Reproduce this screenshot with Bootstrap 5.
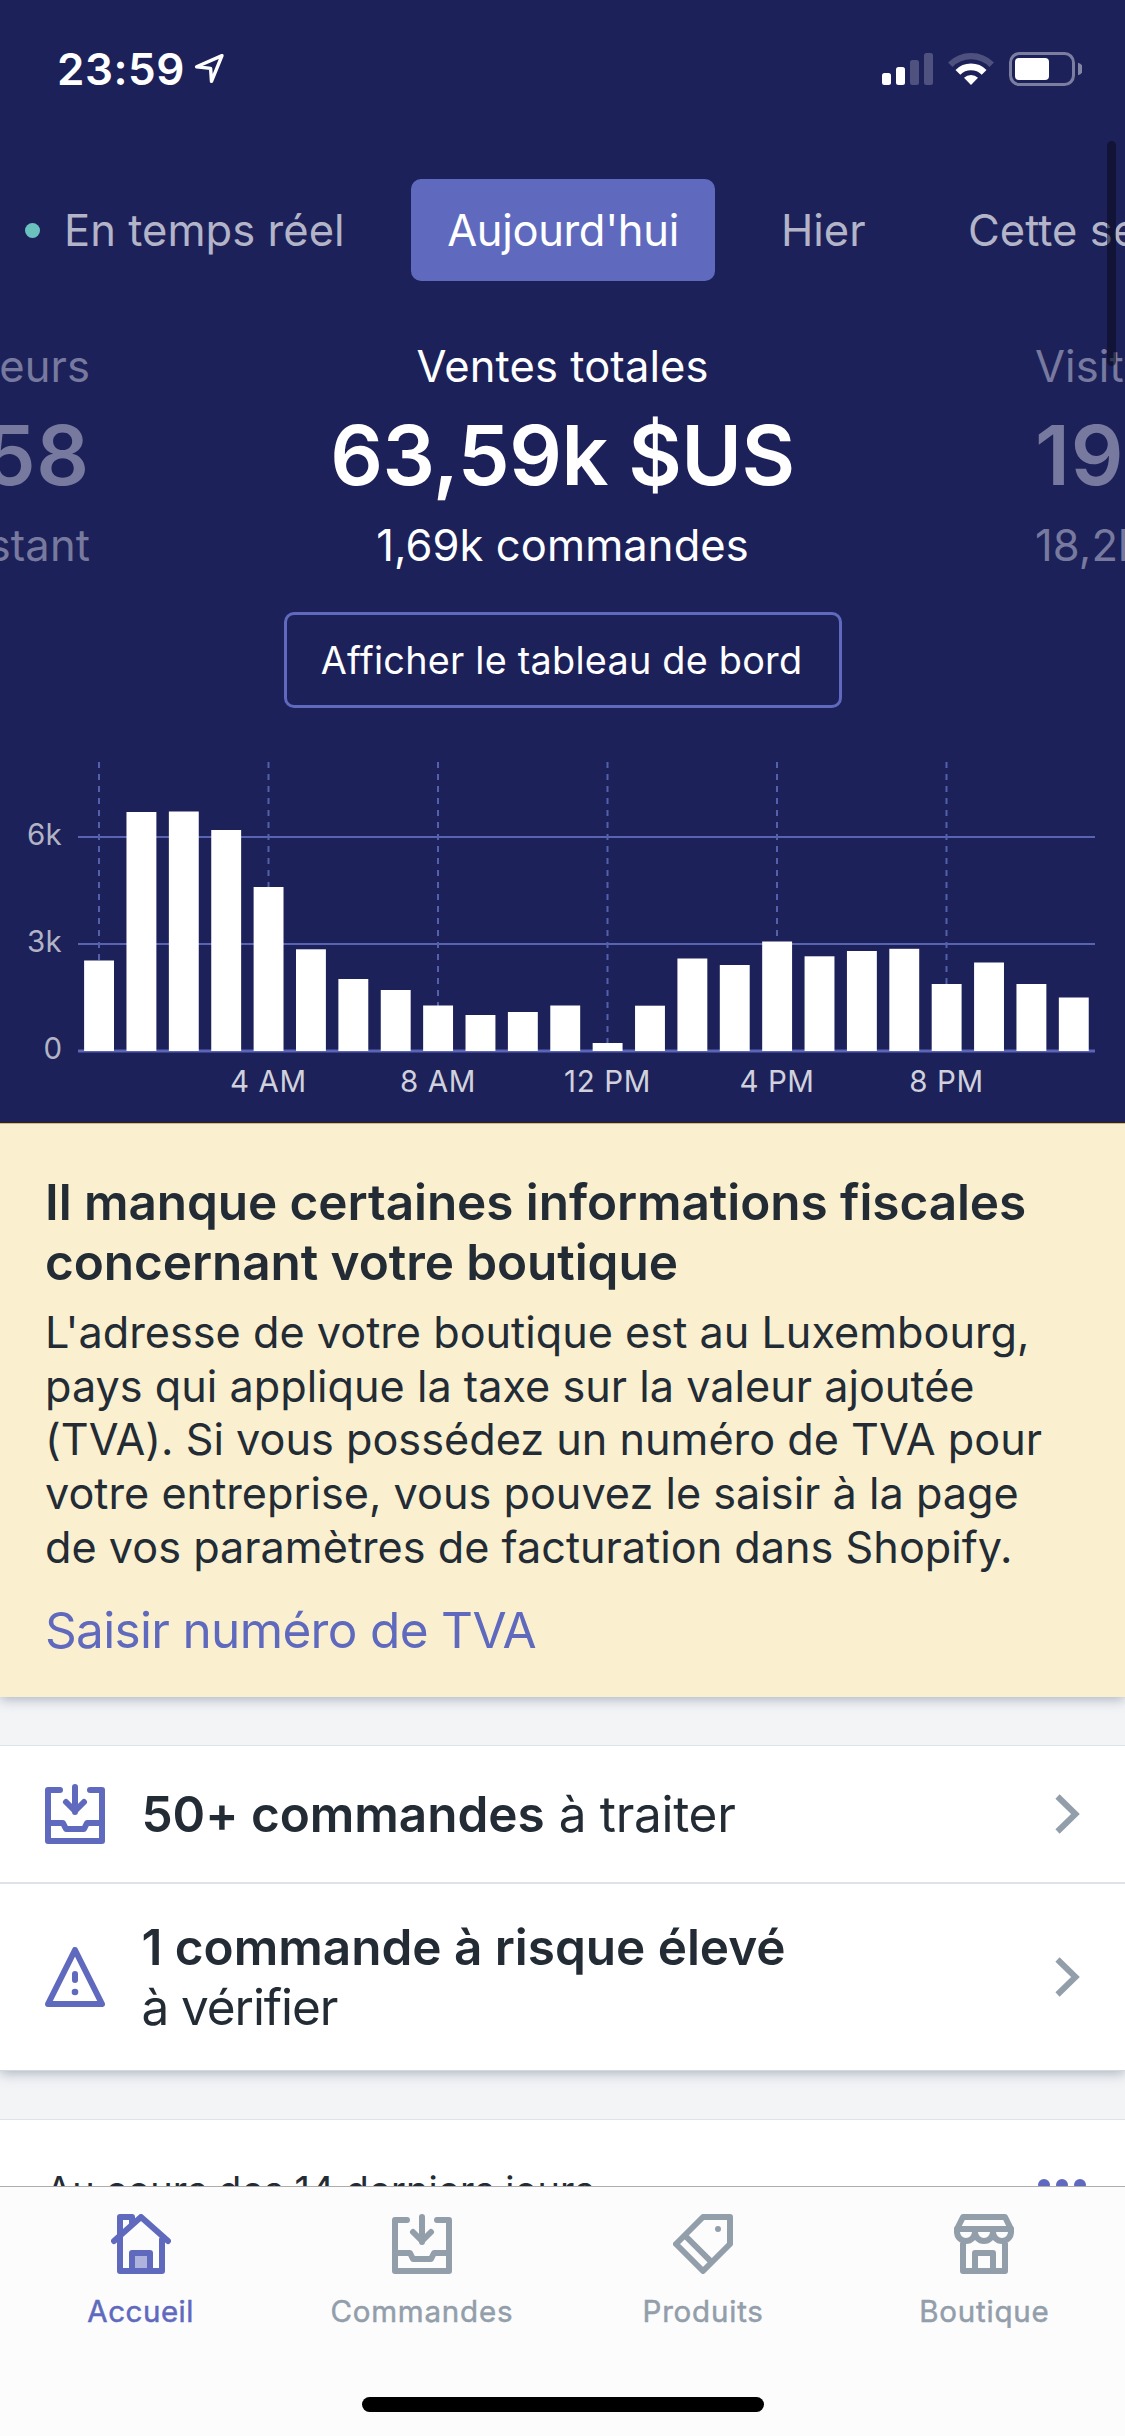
<!DOCTYPE html>
<html lang="fr">
<head>
<meta charset="utf-8">
<meta name="viewport" content="width=device-width, initial-scale=1">
<title>Accueil</title>
<link href="https://cdn.jsdelivr.net/npm/bootstrap@5.3.0/dist/css/bootstrap.min.css" rel="stylesheet">
<style>
  :root { --indigo: #5f6abe; --night: #1d215a; --ink: #232c35; --slate: #939eab; }
  html, body { height: 2436px; overflow: hidden; }
  body { font-family: Inter, "Liberation Sans", sans-serif; background: #f3f4f6; color: var(--ink); width: 1125px; }
  .hero { background: var(--night); color: #fff; height: 1123px; }
  .statusbar { height: 138px; padding: 0 43px 0 57px; }
  .clock { font-size: 44px; font-weight: 600; letter-spacing: .012em; line-height: 60px; }
  .periods { height: 102px; margin-top: 41px; padding-left: 25px; font-size: 43.5px; line-height: 60px; color: #b3b4c8; }
  .live-dot { width: 15px; height: 15px; background: #6bc1bd; }
  .period-live { width: 283px; margin-left: 24px; letter-spacing: .001em; }
  .period-on { width: 304px; margin-left: 64px; border-radius: 10px; background: var(--indigo); color: #fff; letter-spacing: -.0077em; }
  .period-next { margin-left: 66px; width: 87px; }
  .period-week { margin-left: 100px; }
  .metrics { margin-top: 55px; font-size: 43.5px; letter-spacing: .002em; }
  .metric-side { width: 90px; color: #777a9e; }
  .metric-title { line-height: 60px; }
  .metric-value { font-size: 82.5px; font-weight: 600; line-height: 118px; letter-spacing: -.006em; }
  .metric-side .metric-value { letter-spacing: .01em; }
  .metric-note { line-height: 62px; }
  .btn-board { width: 558px; height: 96px; margin-top: 36px; border: 3px solid var(--indigo); border-radius: 10px; color: #fff; font-size: 37.8px; letter-spacing: .006em; padding: 0 2px 0 0; }
  .chart text { font-family: Inter, "Liberation Sans", sans-serif; font-size: 29.5px; }
  .tax-banner { height: 574px; background: #faf0d0; border-top: 1px solid #e9bd4c; padding: 48px 45px 0; }
  .tax-title { font-size: 49.5px; font-weight: 600; line-height: 60px; margin: 0 0 14px; letter-spacing: -.0015em; }
  .tax-text { font-size: 43.2px; line-height: 53.7px; margin: 0 0 25.5px; letter-spacing: .0004em; }
  .tax-link { font-size: 49.5px; line-height: 60px; color: var(--indigo); letter-spacing: -.0135em; }
  .sheet { background: #fff; margin-top: 48px; border-top: 1px solid #dfe2e8; }
  .lifted { box-shadow: 0 2px 12px rgba(60, 80, 110, .42); clip-path: inset(0 0 -20px 0); }
  .todo { background: #fff; padding: 0 45px; font-size: 49.5px; line-height: 60px; }
  .todo-orders { height: 138px; border-bottom: 2px solid #dfe2e7; }
  .todo-risk { height: 187px; border-bottom: 1px solid #d3d7de; }
  .todo-label { margin-left: 36.5px; letter-spacing: -.0008em; }
  .todo-label span { letter-spacing: -.006em; }
  .todo-label .tight { letter-spacing: -.022em; }
  .todo strong { font-weight: 600; }
  .recent { font-size: 38px; line-height: 60px; padding: 40px 39px 0 46px; letter-spacing: .002em; height: 320px; }
  .tabs { height: 250px; background: #fcfcfc; border-top: 1px solid #adadad; }
  .tabs .nav-link { padding: 27px 0 0; color: var(--slate); font-size: 29.5px; line-height: 40px; letter-spacing: .027em; -webkit-text-stroke: .5px currentColor; }
  .tabs .nav-link.active { color: var(--indigo); letter-spacing: .018em; }
  .tabs svg { margin-bottom: 17px; }
  .home-bar { bottom: 24px; width: 402px; height: 15px; border-radius: 8px; background: #000; }
  .scroller { right: 9px; top: 141px; width: 9px; height: 225px; border-radius: 5px; background: rgba(10, 12, 30, .6); }
  .ico { fill: none; stroke: currentColor; stroke-width: 2; stroke-linecap: round; stroke-linejoin: round; display: block; }
</style>
</head>
<body class="position-relative">
<svg width="0" height="0" class="position-absolute" aria-hidden="true">
  <symbol id="inbox" viewBox="0 0 20 20"><path d="M5 2H1v17h18V2h-4M10 1v8.3M7 6l3 3 3-3"/><path d="M1 13h5l1 2h6l1-2h5"/></symbol>
  <symbol id="chevron" viewBox="0 0 25 40"><path d="M2.5 2.500 20.500 20 2.500 37.500" stroke-width="6" stroke-linecap="butt" stroke-linejoin="miter"/></symbol>
</svg>

<header class="hero overflow-hidden">
  <div class="statusbar d-flex align-items-center">
    <span class="clock">23:59</span>
    <svg class="ms-2" width="32" height="32" viewBox="193 53 32 32" fill="none" stroke="#fff" stroke-width="3.4" stroke-linejoin="round"><path d="M222 55.6 196.6 66.8l14 1.6.9 13z"/></svg>
    <svg class="ms-auto" width="200" height="34" viewBox="882 52 200 34">
      <g fill="#fff">
        <rect x="882" y="73" width="9" height="12" rx="2.5"/><rect x="896" y="67" width="9" height="18" rx="2.5"/>
        <g opacity=".22"><rect x="910" y="60" width="9" height="25" rx="2.5"/><rect x="924" y="53" width="9" height="32" rx="2.5"/></g>
        <path d="M971 85l-7-7.2a10.3 10.3 0 0 1 14 0z"/>
      </g>
      <g fill="none" stroke="#fff">
        <path d="M957.9 72.400a18.500 18.500 0 0 1 26.200 0" stroke-width="6.8"/>
        <path d="M950.300 64.700a29.300 29.300 0 0 1 41.400 0" stroke-width="6.4" opacity=".22"/>
        <rect x="1010.5" y="53.5" width="63" height="31" rx="9" stroke-width="3" opacity=".42"/>
      </g>
      <rect x="1015" y="58" width="34" height="22" rx="4" fill="#fff"/>
      <path d="M1078 62.7a6.4 6.4 0 0 1 0 12.5z" fill="#fff" opacity=".45"/>
    </svg>
  </div>

  <nav class="periods d-flex align-items-center text-nowrap">
    <span class="live-dot rounded-circle flex-shrink-0"></span>
    <span class="period-live flex-shrink-0">En temps réel</span>
    <span class="period-on h-100 d-flex align-items-center justify-content-center flex-shrink-0">Aujourd'hui</span>
    <span class="period-next flex-shrink-0">Hier</span>
    <span class="period-week flex-shrink-0">Cette semaine</span>
  </nav>

  <section class="metrics d-flex text-nowrap">
    <div class="metric-side d-flex flex-column align-items-end overflow-hidden">
      <div class="metric-title">Visiteurs</div><div class="metric-value">58</div><div class="metric-note">en cet instant</div>
    </div>
    <div class="flex-fill text-center">
      <div class="metric-title">Ventes totales</div><div class="metric-value">63,59k $US</div><div class="metric-note">1,69k commandes</div>
    </div>
    <div class="metric-side overflow-hidden">
      <div class="metric-title">Visites</div><div class="metric-value">19</div><div class="metric-note">18,2k</div>
    </div>
  </section>
  <a class="btn btn-board d-flex align-items-center justify-content-center mx-auto" href="#">Afficher le tableau de bord</a>

  <svg class="chart d-block" width="1125" height="415" viewBox="0 708 1125 415">
    <path d="M78 837H1095M78 944H1095" stroke="#5863b2" stroke-width="2"/>
    <path d="M78 1051H1095" stroke="#5a65b8" stroke-width="3"/>
    <path d="M99 762V1051M268.5 762V1051M438 762V1051M607.5 762V1051M777 762V1051M946.5 762V1051" stroke="#5560ad" stroke-width="2" stroke-dasharray="6 6"/>
    <g fill="#fff" id="bars"></g>
    <g fill="#b2b4c6" text-anchor="end"><text x="62" y="845" letter-spacing=".3">6k</text><text x="62" y="952" letter-spacing=".3">3k</text><text x="62" y="1059">0</text></g>
    <g fill="#d0d1dd" text-anchor="middle" letter-spacing=".6"><text x="268.3" y="1092">4 AM</text><text x="438" y="1092">8 AM</text><text x="607.5" y="1092">12 PM</text><text x="777" y="1092">4 PM</text><text x="946.5" y="1092">8 PM</text></g>
  </svg>
</header>

<section class="tax-banner lifted text-nowrap">
  <h2 class="tax-title">Il manque certaines informations fiscales<br>concernant votre boutique</h2>
  <p class="tax-text">L'adresse de votre boutique est au Luxembourg,<br>pays qui applique la taxe sur la valeur ajoutée<br>(TVA). Si vous possédez un numéro de TVA pour<br>votre entreprise, vous pouvez le saisir à la page<br>de vos paramètres de facturation dans Shopify.</p>
  <a class="tax-link d-block text-decoration-none" href="#">Saisir numéro de TVA</a>
</section>

<section class="sheet lifted">
  <div class="todo todo-orders d-flex align-items-center">
    <svg class="ico" width="60" height="60" color="#5f6abe"><use href="#inbox"/></svg>
    <div class="todo-label"><strong>50+ commandes</strong> <span>à traiter</span></div>
    <svg class="ico ms-auto" width="25" height="40" color="#939eab"><use href="#chevron"/></svg>
  </div>
  <div class="todo todo-risk d-flex align-items-center">
    <svg class="ico" width="60" height="60" viewBox="0 0 20 20" color="#5f6abe"><path d="M10 1l9 18H1zM10 9v2"/><circle cx="10" cy="15" r="1.1" fill="currentColor" stroke="none"/></svg>
    <div class="todo-label"><strong>1 commande à risque élevé</strong><br><span class="tight">à vérifier</span></div>
    <svg class="ico ms-auto" width="25" height="40" color="#939eab"><use href="#chevron"/></svg>
  </div>
</section>

<section class="sheet recent d-flex">
  <span>Au cours des 14 derniers jours</span>
  <svg class="ms-auto" width="48" height="60" viewBox="0 0 48 60" fill="#5f6abe"><circle cx="6" cy="25" r="6"/><circle cx="24" cy="25" r="6"/><circle cx="42" cy="25" r="6"/></svg>
</section>

<div class="scroller position-absolute"></div>

<nav class="tabs fixed-bottom">
  <div class="nav row-cols-4">
    <a class="nav-link active d-flex flex-column align-items-center" href="#">
      <svg class="ico" width="60" height="60" viewBox="0 0 20 20"><path d="M8 14h4v4H8z" fill="currentColor" stroke="none" opacity=".5"/><path d="M3 8v11h14V8.500M3 8V1h4v2.500M1 9l9-8 9 8M7 19v-6h6v6"/></svg>Accueil</a>
    <a class="nav-link d-flex flex-column align-items-center" href="#"><svg class="ico" width="60" height="60"><use href="#inbox"/></svg>Commandes</a>
    <a class="nav-link d-flex flex-column align-items-center" href="#">
      <svg class="ico" width="60" height="60" viewBox="0 0 20 20"><path d="M10 1h9v9l-9 9-9-9zM4.300 7.500l8.400 8.400"/><circle cx="15" cy="5" r="1" fill="currentColor" stroke="none"/></svg>Produits</a>
    <a class="nav-link d-flex flex-column align-items-center" href="#">
      <svg class="ico" width="60" height="60" viewBox="0 0 20 20"><path d="M3 1h14l2 4H1z"/><path d="M1 5v1a3 3 0 0 0 6 0V5M7 6a3 3 0 0 0 6 0V5M13 6a3 3 0 0 0 6 0V5M3 9v10h14V9M7 19v-6h6v6"/></svg>Boutique</a>
  </div>
  <div class="home-bar position-absolute start-50 translate-middle-x"></div>
</nav>

<script>
  // Height of each hourly bar, from midnight to 11 PM
  const hours = [90.5, 239, 239.5, 221, 164, 101.7, 72, 61, 45.5, 36, 39, 45.5, 8, 45.3, 92.5, 86, 109.5, 94.7, 100, 102.2, 67, 88.5, 67, 53.5];
  document.getElementById('bars').innerHTML = hours.map((h, i) =>
    `<rect x="${84.1 + i * 42.38}" y="${1051 - h}" width="29.9" height="${h}"/>`).join('');
</script>
<script src="https://cdn.jsdelivr.net/npm/bootstrap@5.3.0/dist/js/bootstrap.bundle.min.js"></script>
</body>
</html>
